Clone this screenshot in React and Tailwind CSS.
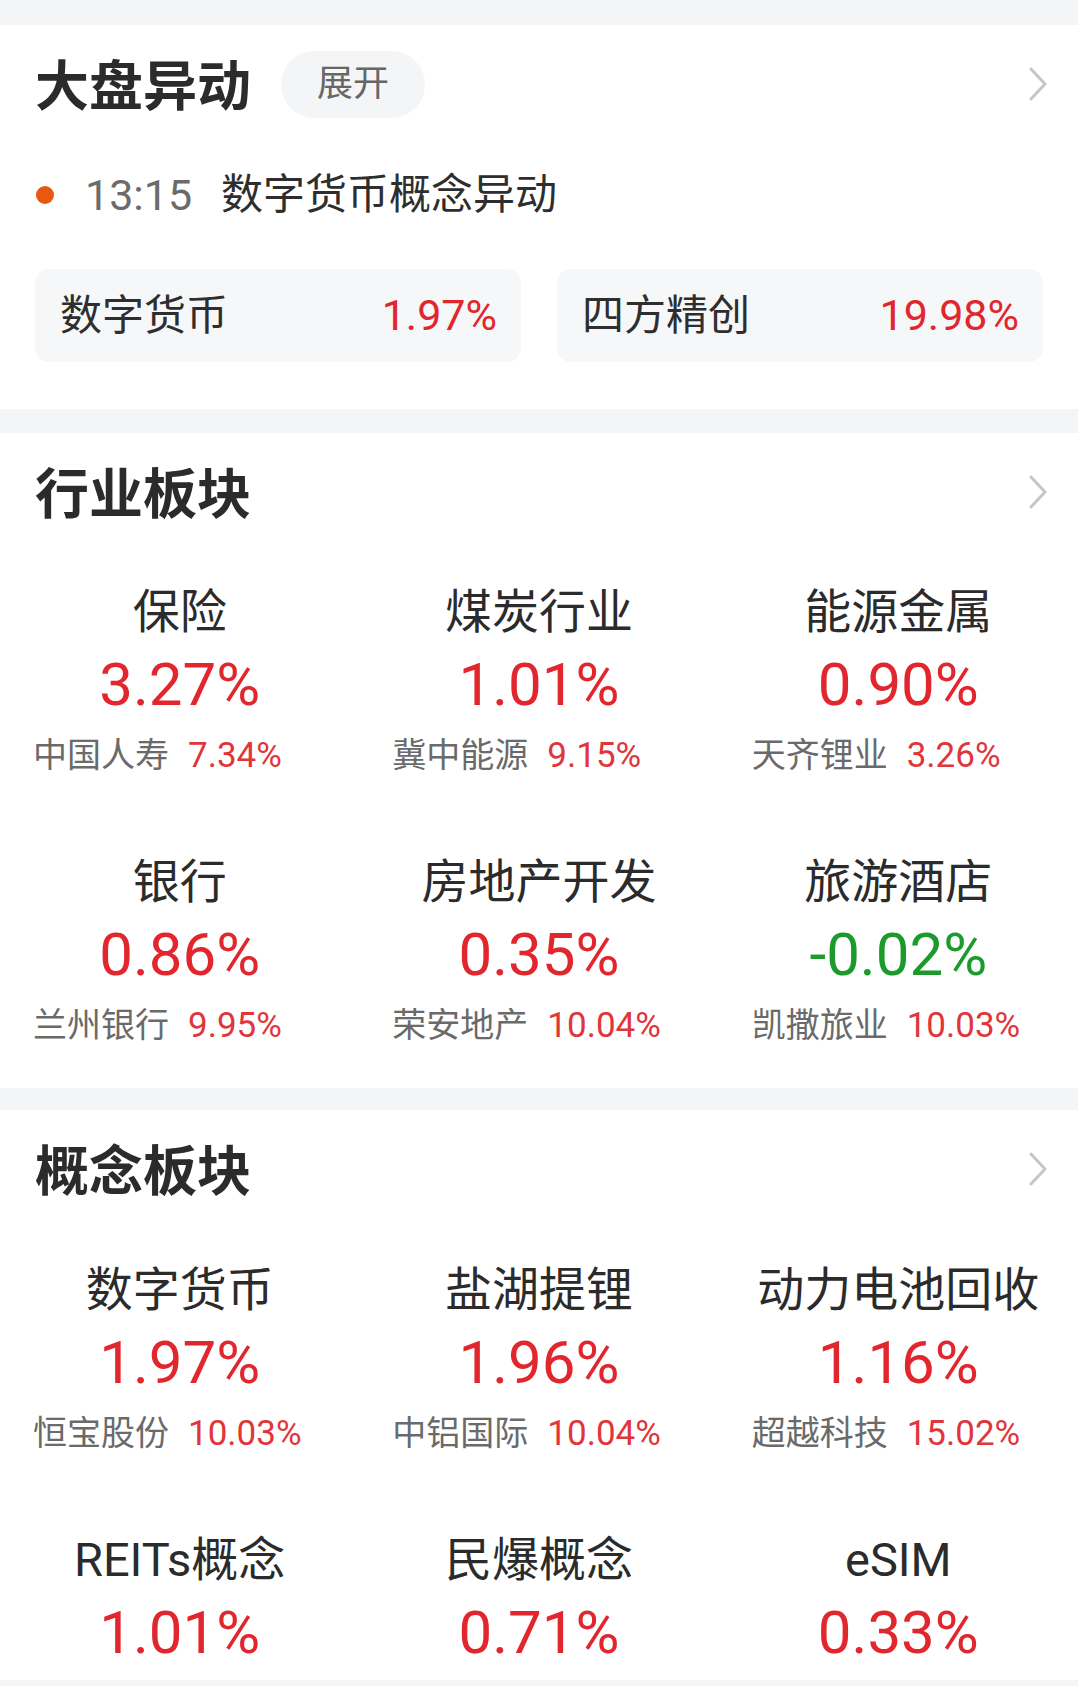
import React from 'react';

const FONT = { fontFamily: "Roboto, 'Noto Sans CJK SC', 'Noto Sans', sans-serif" };

function Chevron() {
  return (
    <svg width="20" height="34" viewBox="0 0 20 34" fill="none" className="shrink-0">
      <path d="M3 2 L17 17 L3 32" stroke="#c6c6c6" strokeWidth="3" strokeLinecap="round" strokeLinejoin="round" />
    </svg>
  );
}

function SectionHeader({ title, extra }) {
  return (
    <div className="h-[118px] flex items-center pl-[35px] pr-[30px]">
      <span className="pt-[8px] text-[54px] font-bold text-[#2b2b2b] leading-none whitespace-nowrap">{title}</span>
      {extra}
      <div className="flex-1" />
      <Chevron />
    </div>
  );
}

function Cell({ name, pct, down, sub }) {
  return (
    <div className="flex flex-col min-w-0">
      <div className="h-[60px] flex items-center justify-center text-[47px] text-[#2b2b2b] leading-none whitespace-nowrap">
        {name}
      </div>
      <div
        className={
          down
            ? 'mt-[12px] h-[64px] flex items-center justify-center text-[60px] leading-none text-[#1c9a2c]'
            : 'mt-[12px] h-[64px] flex items-center justify-center text-[60px] leading-none text-[#e1262d]'
        }
      >
        {pct}
      </div>
      {sub && (
        <div className="mt-[18px] h-[40px] flex items-center pl-[33px] leading-none whitespace-nowrap">
          <span className="text-[34px] text-[#6a6a6a]">{sub[0]}</span>
          <span className="ml-[19px] text-[35px] text-[#e0353b]">{sub[1]}</span>
        </div>
      )}
    </div>
  );
}

const industry = [
  { name: '保险', pct: '3.27%', sub: ['中国人寿', '7.34%'] },
  { name: '煤炭行业', pct: '1.01%', sub: ['冀中能源', '9.15%'] },
  { name: '能源金属', pct: '0.90%', sub: ['天齐锂业', '3.26%'] },
  { name: '银行', pct: '0.86%', sub: ['兰州银行', '9.95%'] },
  { name: '房地产开发', pct: '0.35%', sub: ['荣安地产', '10.04%'] },
  { name: '旅游酒店', pct: '-0.02%', down: true, sub: ['凯撒旅业', '10.03%'] },
];

const concept = [
  { name: '数字货币', pct: '1.97%', sub: ['恒宝股份', '10.03%'] },
  { name: '盐湖提锂', pct: '1.96%', sub: ['中铝国际', '10.04%'] },
  { name: '动力电池回收', pct: '1.16%', sub: ['超越科技', '15.02%'] },
  { name: 'REITs概念', pct: '1.01%' },
  { name: '民爆概念', pct: '0.71%' },
  { name: 'eSIM', pct: '0.33%' },
];

export default function App() {
  return (
    <div className="w-[1078px] min-h-[1686px] bg-[#f4f5f7] pt-[25px]" style={FONT}>
      {/* 大盘异动 */}
      <section className="bg-white">
        <SectionHeader
          title="大盘异动"
          extra={
            <div className="ml-[30px] w-[144px] h-[67px] rounded-full bg-[#f4f5f6] flex items-center justify-center text-[36px] text-[#666666] leading-none">
              展开
            </div>
          }
        />
        <div className="h-[104px] flex items-center pl-[36px]">
          <div className="w-[18px] h-[18px] rounded-full bg-[#e8590f]" />
          <span className="ml-[31px] text-[43px] text-[#6b6b6b] leading-none">13:15</span>
          <span className="ml-[29px] text-[42px] text-[#2e2e2e] leading-none">数字货币概念异动</span>
        </div>
        <div className="mt-[22px] px-[35px] pb-[47px] grid grid-cols-2 gap-[36px]">
          <div className="h-[93px] rounded-[14px] bg-[#f6f7f9] flex items-center justify-between pl-[25px] pr-[24px] leading-none">
            <span className="text-[42px] text-[#2e2e2e]">数字货币</span>
            <span className="text-[43px] text-[#e1262d]">1.97%</span>
          </div>
          <div className="h-[93px] rounded-[14px] bg-[#f6f7f9] flex items-center justify-between pl-[25px] pr-[24px] leading-none">
            <span className="text-[42px] text-[#2e2e2e]">四方精创</span>
            <span className="text-[43px] text-[#e1262d]">19.98%</span>
          </div>
        </div>
      </section>

      {/* 行业板块 */}
      <section className="mt-[24px] bg-white">
        <SectionHeader title="行业板块" />
        <div className="grid grid-cols-3 gap-y-[76px] pt-[30px] pb-[43px]">
          {industry.map((c) => (
            <Cell key={c.name} {...c} />
          ))}
        </div>
      </section>

      {/* 概念板块 */}
      <section className="mt-[22px] bg-white">
        <SectionHeader title="概念板块" />
        <div className="grid grid-cols-3 gap-y-[76px] pt-[31px] pb-[15px]">
          {concept.map((c) => (
            <Cell key={c.name} {...c} />
          ))}
        </div>
      </section>
    </div>
  );
}
